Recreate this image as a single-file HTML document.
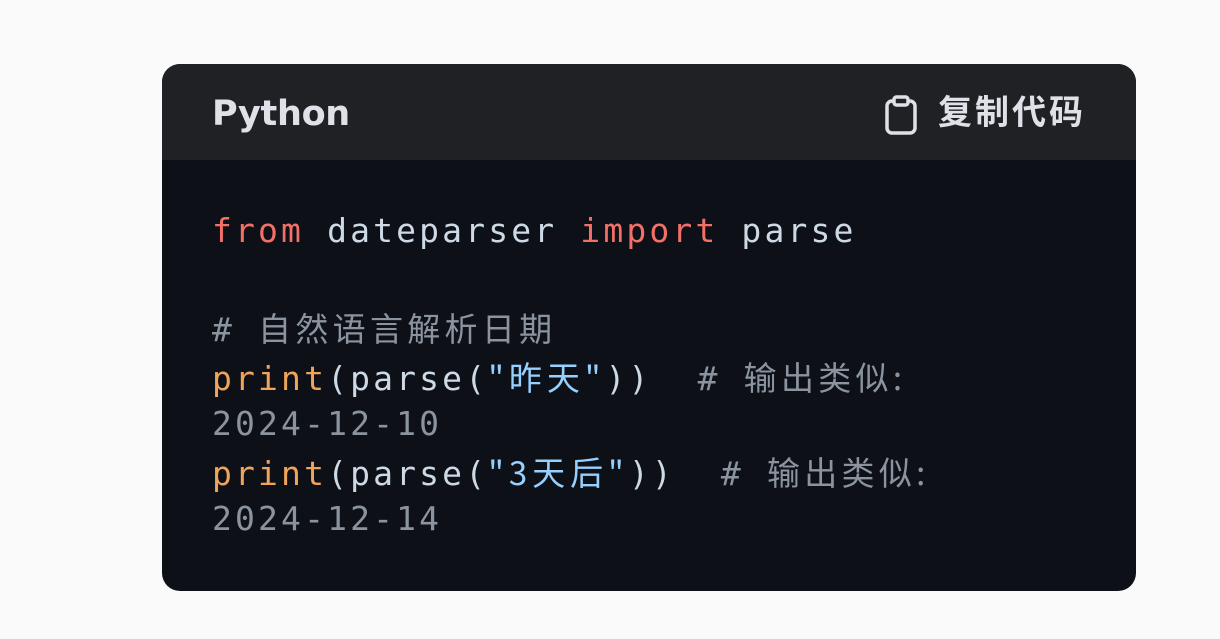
<!DOCTYPE html>
<html><head><meta charset="utf-8"><style>
html,body{margin:0;width:1220px;height:639px;background:#fafafa;overflow:hidden}
.card{position:absolute;left:162px;top:64px;width:974px;height:527px;border-radius:18px;background:#0d1017;overflow:hidden}
.hd{position:absolute;left:0;top:0;width:100%;height:96px;background:#202124}
.py{position:absolute;left:50px;top:29px;font:bold 35px "DejaVu Sans","Liberation Sans",sans-serif;color:#e0e0e8;line-height:42px;letter-spacing:-0.3px}
.cp{position:absolute;left:776px;top:27px;font:bold 34px "Liberation Sans","Noto Sans CJK SC",sans-serif;color:#e0e0e8;line-height:44px;letter-spacing:3px}
.ic{position:absolute;left:722px;top:31px}
.l{position:absolute;left:50px;white-space:pre;font:33px "DejaVu Sans Mono","Liberation Mono","Noto Sans CJK SC",monospace;letter-spacing:3.15px;line-height:48px;color:#cdd9e5}
.k{color:#f47067}.f{color:#f0a45a}.s{color:#96d0ff;font-family:"Noto Sans CJK SC",sans-serif;letter-spacing:5px}.c{color:#8b949e}
.cj{font-family:"Noto Sans CJK SC",sans-serif;letter-spacing:4.3px}
</style></head><body>
<div class="card">
<div class="hd">
<div class="py">Python</div>
<svg class="ic" width="34" height="40" viewBox="0 0 34 40"><rect x="3" y="6" width="28" height="32" rx="5" fill="none" stroke="#e0e0e8" stroke-width="3.5"/><rect x="10" y="2" width="14" height="8" rx="2.5" fill="#202124" stroke="#e0e0e8" stroke-width="3.5"/></svg>
<div class="cp">复制代码</div>
</div>
<div class="l" style="top:143px"><span class="k">from</span> dateparser <span class="k">import</span> parse</div>
<div class="l c" style="top:239px"># <span class="cj">自然语言解析日期</span></div>
<div class="l" style="top:288px"><span class="f">print</span>(parse(<span class="s">"昨天"</span>))  <span class="c"># <span class="cj">输出类似:</span></span></div>
<div class="l c" style="top:336px">2024-12-10</div>
<div class="l" style="top:383px"><span class="f">print</span>(parse(<span class="s">"3天后"</span>))  <span class="c"># <span class="cj">输出类似:</span></span></div>
<div class="l c" style="top:431px">2024-12-14</div>
</div>
</body></html>
